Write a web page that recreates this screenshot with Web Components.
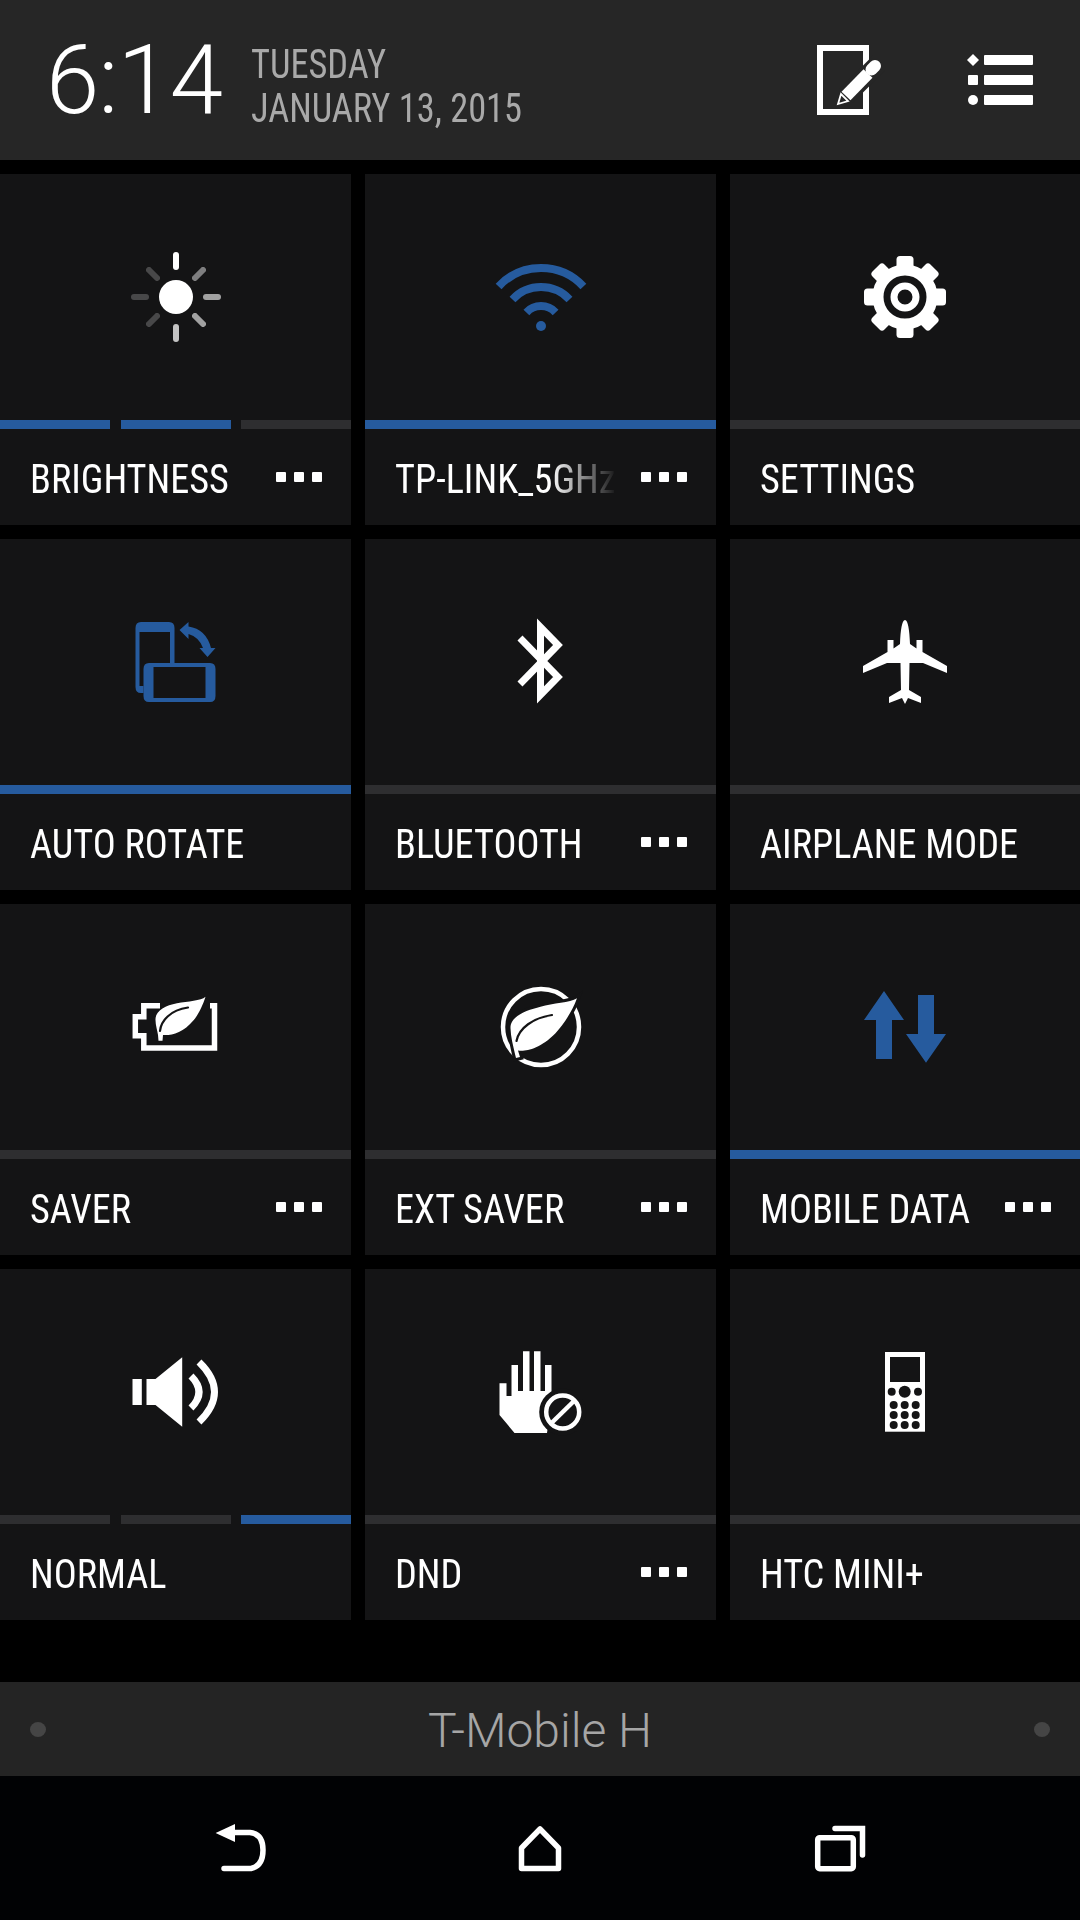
<!DOCTYPE html>
<html><head><meta charset="utf-8"><title>Quick settings</title>
<style>
html,body{margin:0;padding:0;background:#000;}
body{width:1080px;height:1920px;overflow:hidden;font-family:Roboto,"Liberation Sans",sans-serif;display:flex;flex-direction:column;}
</style></head>
<body>
<qs-header></qs-header>
<qs-grid>
  <qs-tile label="BRIGHTNESS" icon="sun" more bar="on on off"></qs-tile>
  <qs-tile label="TP-LINK_5GHz" icon="wifi" more fade blue bar="on"></qs-tile>
  <qs-tile label="SETTINGS" icon="gear" bar="off"></qs-tile>
  <qs-tile label="AUTO ROTATE" icon="rotate" blue bar="on"></qs-tile>
  <qs-tile label="BLUETOOTH" icon="bluetooth" more bar="off"></qs-tile>
  <qs-tile label="AIRPLANE MODE" icon="plane" bar="off"></qs-tile>
  <qs-tile label="SAVER" icon="saver" more bar="off"></qs-tile>
  <qs-tile label="EXT SAVER" icon="extsaver" more bar="off"></qs-tile>
  <qs-tile label="MOBILE DATA" icon="data" more blue bar="on"></qs-tile>
  <qs-tile label="NORMAL" icon="volume" bar="off off on"></qs-tile>
  <qs-tile label="DND" icon="dnd" more bar="off"></qs-tile>
  <qs-tile label="HTC MINI+" icon="phone" bar="off"></qs-tile>
</qs-grid>
<qs-carrier>T-Mobile H</qs-carrier>
<qs-nav></qs-nav>
<script>
const BG='#141415';
const leaf=(d,v)=>`<path d="${d}" fill="currentColor"/><path d="${v}" fill="none" stroke="${BG}" stroke-width="2.2" stroke-linecap="round"/>`;
const EXT='M86 21.300C79 26 62 26 49.500 29.700C36 33 19 39 19.500 51.300C19.800 60 22 68 23.800 76.300L25 81L29 80L27 73.500C34 74.500 48 73 64.500 56.300C72 48 81 35 86 21.300Z';
const ICONS={
 sun:`<circle cx="50" cy="50" r="17" fill="currentColor"/>
  <g stroke="#fff" stroke-width="6" stroke-linecap="round">
  <line x1="50" y1="8" x2="50" y2="20"/>
  <line x1="77" y1="23" x2="69" y2="31" opacity=".45"/>
  <line x1="92" y1="50" x2="80" y2="50" opacity=".6"/>
  <line x1="77" y1="77" x2="69" y2="69" opacity=".6"/>
  <line x1="50" y1="80" x2="50" y2="92" opacity=".75"/>
  <line x1="23" y1="77" x2="31" y2="69" opacity=".22"/>
  <line x1="8" y1="50" x2="20" y2="50" opacity=".22"/>
  <line x1="23" y1="23" x2="31" y2="31" opacity=".22"/></g>`,
 wifi:`<g fill="none" stroke="currentColor" stroke-width="8">
  <path d="M7.600 39.400A58 58 0 0 1 92.400 39.400"/><path d="M21.500 52.400A39 39 0 0 1 78.500 52.400"/><path d="M35.400 65.400A20 20 0 0 1 64.600 65.400"/></g>
  <circle cx="50" cy="79" r="5" fill="currentColor"/>`,
 gear:`<g fill="currentColor">${[0,45,90,135,180,225,270,315].map(a=>`<rect x="41.500" y="9" width="17" height="14" rx="3.500" transform="rotate(${a} 50 50)"/>`).join('')}</g>
  <circle cx="50" cy="50" r="27" fill="none" stroke="currentColor" stroke-width="11"/>
  <circle cx="50" cy="50" r="11" fill="none" stroke="currentColor" stroke-width="7"/>`,
 rotate:`<g fill="currentColor"><path fill-rule="evenodd" d="M15 10H43Q48.500 10 48.500 16V51H44V20H13.500V74H17.500V81H15Q9.500 81 9.500 75V16Q9.500 10 15 10Z"/>
  <path fill-rule="evenodd" d="M23 51H84Q89.500 51 89.500 57V84Q89.500 90 84 90H23Q17.500 90 17.500 84V57Q17.500 51 23 51ZM27.500 55V86H79.500V55Z"/>
  <path d="M53.500 18L62.500 10V14.500Q80 17 85 36H89.500L81.500 45L73.500 36H77Q73 25 62.500 22V27Z"/></g>`,
 bluetooth:`<path d="M29 26L67 65L49.500 83V15L67 33L29 72" fill="none" stroke="currentColor" stroke-width="7"/>`,
 plane:`<path fill="currentColor" d="M50 8C47 8 45.500 18 45 32L38.500 36.500V28H32.500V40L8 54V61L32 51H45.500L46 78L34 85V91L47 86L50 92L53 86L66 91V85L54 78L54.500 51H68L92 61V54L67.500 40V28H61.500V36.500L55 32C54.500 18 53 8 50 8Z"/>`,
 saver:`<path fill="none" stroke="currentColor" stroke-width="5.500" d="M34 28.700H17.800V39.700H9.300V58.700H17.800V71H88.500V28.700H84"/>
  ${leaf('M79.500 19.700C75 24 62 24 51 26.300C39 28.500 29 34 29.500 43C29.500 48 31.500 54 32 58L32.500 63.700H36.500L37 58C46 58.500 57 56 67.800 43C72 38 77 28 79.500 19.700Z','M34 54C35 44 44 33 62 30.500')}`,
 extsaver:`<circle cx="50" cy="50" r="38" fill="none" stroke="currentColor" stroke-width="4.500"/>
  <path d="${EXT}" fill="${BG}" stroke="${BG}" stroke-width="6"/>
  ${leaf(EXT,'M25.500 64C28 51 42 41 61 38')}`,
 data:`<path fill="currentColor" d="M29 14L49 43H37V82H21V43H9ZM63 18H79V57H91L71 85.700L51 57H63Z"/>`,
 volume:`<path fill="currentColor" d="M6.500 37H15.800V63H6.500ZM20.500 37H29.500L56.200 15.300V84.700L29.500 63H20.500Z"/>
  <g fill="none" stroke="currentColor" stroke-width="7"><path d="M65 34Q81 50 65 66"/><path d="M73 20Q104 50 73 80"/></g>`,
 dnd:`<path fill="currentColor" d="M8.500 41.300H15.500V54H20.500V23H27V49H32V9.300H38.500V49H43V9.300H49.500V49H54V23H60.500V60L56 91H23.500L8.500 73Z"/>
  <circle cx="71.700" cy="70" r="23.500" fill="${BG}"/>
  <circle cx="71.700" cy="70" r="16.500" fill="none" stroke="currentColor" stroke-width="4.500"/>
  <line x1="60.500" y1="81" x2="83" y2="59" stroke="currentColor" stroke-width="4.500"/>`,
 phone:`<rect x="30" y="10" width="40" height="79.700" fill="currentColor"/><rect x="35" y="15" width="30" height="25" fill="${BG}"/>
  <g fill="${BG}"><circle cx="36.700" cy="49.700" r="4"/><circle cx="49.700" cy="49.700" r="6"/><circle cx="63" cy="49.700" r="4"/>
  ${[63,73,83].map(y=>[38.700,49.700,60.700].map(x=>`<circle cx="${x}" cy="${y}" r="4"/>`).join('')).join('')}</g>`
};
class QsIcon extends HTMLElement{
 constructor(){super();this.attachShadow({mode:'open'});}
 connectedCallback(){this.shadowRoot.innerHTML=`<style>:host{display:block;width:100px;height:100px}svg{display:block;width:100%;height:100%}</style><svg viewBox="0 0 100 100">${ICONS[this.getAttribute('name')]||''}</svg>`;}
}
class QsHeader extends HTMLElement{
 constructor(){super();this.attachShadow({mode:'open'}).innerHTML=`<style>
 :host{display:flex;align-items:center;height:160px;background:#262626;flex:none}
 .clock{font:300 96px/1 Roboto,sans-serif;color:#fff;margin-left:46px;width:205px;letter-spacing:-1px}
 .date{font:400 40px/44px Roboto,sans-serif;font-stretch:75%;color:#a9a9a9;white-space:nowrap;display:flex;flex-direction:column;margin-top:14px}
 .date span{display:block;transform:scaleX(.91);transform-origin:left center}
 .sp{flex:1}
 svg{display:block}
 .e{margin-right:75px}.l{margin-right:40px}
 </style>
 <div class="clock">6:14</div>
 <div class="date"><span>TUESDAY</span><span>JANUARY 13, 2015</span></div>
 <div class="sp"></div>
 <svg class="e" width="75" height="80" viewBox="810 40 75 80">
  <rect x="820" y="48" width="46" height="64" fill="none" stroke="#fff" stroke-width="6"/>
  <path d="M846 96L880 62" stroke="#262626" stroke-width="19"/>
  <path d="M846 96L868 73.500" stroke="#fff" stroke-width="12.500"/>
  <path d="M871.500 69.500L875 66" stroke="#fff" stroke-width="12" stroke-linecap="round"/>
  <path d="M838 104L841 94L848 101Z" fill="#262626" stroke="#fff" stroke-width="1.800"/>
 </svg>
 <svg class="l" width="80" height="60" viewBox="960 50 80 60" fill="#fff">
  <path d="M973 54L979 60L973 66L967 60Z"/><rect x="968" y="75" width="10" height="10" rx="1"/><circle cx="973" cy="100" r="5"/>
  <rect x="984" y="55" width="49" height="10" rx="1"/><rect x="984" y="75" width="49" height="10" rx="1"/><rect x="984" y="95" width="49" height="10" rx="1"/>
 </svg>`;}
}
class QsGrid extends HTMLElement{
 constructor(){super();this.attachShadow({mode:'open'}).innerHTML=`<style>
 :host{display:grid;flex:none;grid-template-columns:351px 351px 350px;grid-auto-rows:351px;gap:14px;margin-top:14px}
 </style><slot></slot>`;}
}
class QsTile extends HTMLElement{
 constructor(){super();this.attachShadow({mode:'open'});}
 connectedCallback(){
  const g=a=>this.getAttribute(a), more=this.hasAttribute('more'), fade=this.hasAttribute('fade');
  const segs=(g('bar')||'off').split(' ').map(s=>`<i class="${s}"></i>`).join('');
  this.shadowRoot.innerHTML=`<style>
  :host{display:flex;flex-direction:column;background:${BG};color:#fff;min-width:0}
  .ic{height:246px;display:flex;align-items:center;justify-content:center;flex:none}
  .ic qs-icon{color:${this.hasAttribute('blue')?'#265b9e':'#fff'}}
  .bar{display:flex;gap:10.500px;height:9px;flex:none}
  .bar i{flex:1;display:block;background:#2e2e30}.bar i.on{background:#265b9e}
  .lab{height:96px;flex:none;display:flex;align-items:center;padding:0 29px 0 30px}
  .t{flex:1;min-width:0;overflow:hidden;white-space:nowrap;padding-top:6px;font:400 40px/48px Roboto,sans-serif;font-stretch:75%;${fade?'-webkit-mask-image:linear-gradient(90deg,#000 70%,transparent 100%);mask-image:linear-gradient(90deg,#000 70%,transparent 100%);':''}}
  .t span{display:inline-block;transform:scaleX(.957);transform-origin:left center}
  .m{display:flex;gap:8px;margin-left:24px;flex:none}
  .m b{display:block;width:10px;height:10px;background:#fff;border-radius:1px}
  </style>
  <div class="ic"><qs-icon name="${g('icon')}"></qs-icon></div>
  <div class="bar">${segs}</div>
  <div class="lab"><div class="t"><span>${g('label')}</span></div>${more?'<div class="m"><b></b><b></b><b></b></div>':''}</div>`;
 }
}
class QsCarrier extends HTMLElement{
 constructor(){super();this.attachShadow({mode:'open'}).innerHTML=`<style>
 :host{display:flex;flex:none;align-items:center;justify-content:space-between;height:94px;margin-top:62px;background:#242424;padding:0 30px;color:#a6a6a6;font:350 48px/1 Roboto,sans-serif;font-stretch:96%;box-sizing:border-box}
 i{display:block;width:16px;height:15px;border-radius:50%;background:#454545}
 span{display:block;padding-top:3px}
 </style><i></i><span><slot></slot></span><i></i>`;}
}
class QsNav extends HTMLElement{
 constructor(){super();this.attachShadow({mode:'open'}).innerHTML=`<style>
 :host{display:flex;flex:none;height:144px;background:#010204;align-items:center;justify-content:center}
 div{width:299.500px;display:flex;justify-content:center}
 svg{display:block}
 </style>
 <div><svg width="60" height="56" viewBox="211 1820 60 56" fill="none" stroke="#fff" stroke-width="5.500">
  <path d="M215.600 1833L235 1824V1842Z" fill="#fff" stroke="none"/>
  <path d="M233 1832.500H250Q263 1834 263 1850Q263 1866 251 1868.500H224" stroke-linecap="round"/></svg></div>
 <div><svg width="60" height="56" viewBox="510 1820 60 56" fill="none" stroke="#fff" stroke-width="5.500">
  <path d="M540 1829L521.500 1848V1868.500H558.500V1848Z" stroke-linejoin="round"/></svg></div>
 <div><svg width="60" height="56" viewBox="810 1820 60 56" fill="none" stroke="#fff" stroke-width="5.500">
  <rect x="817.700" y="1837.700" width="35.600" height="31" rx="2"/>
  <path d="M835 1828.500H862.500V1855" stroke-linecap="round"/></svg></div>`;}
}
customElements.define('qs-icon',QsIcon);
customElements.define('qs-header',QsHeader);
customElements.define('qs-grid',QsGrid);
customElements.define('qs-tile',QsTile);
customElements.define('qs-carrier',QsCarrier);
customElements.define('qs-nav',QsNav);
</script>
</body></html>
